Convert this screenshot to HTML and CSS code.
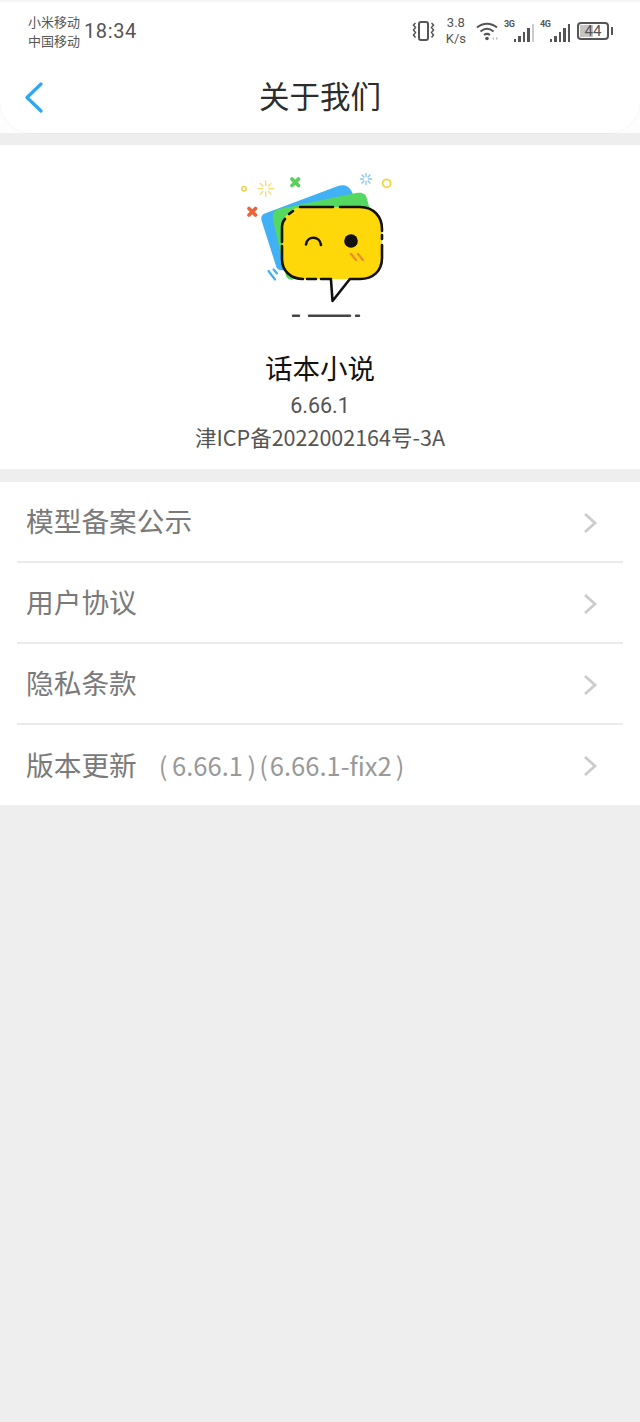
FILE: index.html
```html
<!DOCTYPE html>
<html lang="zh-CN">
<head>
    <meta charset="UTF-8">
    <meta name="viewport" content="width=device-width, initial-scale=1.0">
    <title>关于我们</title>
    <link rel="stylesheet" href="styles.css">
</head>
<body>
    <div class="top-wrap">
    <header class="top-card">
        <div class="status-bar">
            <div class="carriers"><span>小米移动</span><span>中国移动</span></div>
            <div class="clock">18:34</div>
            <div class="status-right">
                <svg class="vibrate" width="23" height="22" viewBox="0 0 23 22" fill="none" stroke="#555" stroke-width="2">
                    <rect x="7" y="2" width="9" height="18" rx="2"/>
                    <path d="M3.500 3L1.500 5l2 2.500-2 2.500 2 2.500-2 2.500 2 2.500M19.500 3l2 2-2 2.500 2 2.500-2 2.500 2 2.500-2 2.500" stroke-width="1.500"/>
                </svg>
                <div class="speed"><span>3.8</span><span>K/s</span></div>
                <svg class="wifi" width="23" height="20" viewBox="0 0 23 20" fill="none" stroke="#555" stroke-width="2">
                    <path d="M1 6.500c6-5 14-5 20 0M4.500 10.500c4-3.400 9-3.400 13 0M8 14c2-1.500 4-1.500 6 0"/>
                    <circle cx="11" cy="17.500" r="1.800" fill="#555" stroke="none"/>
                    <path d="M16 17.500l2-1.800v3.600zM22 17.500l-2-1.800v3.600z" fill="#c4c4c4" stroke="none"/>
                </svg>
                <div class="signal">
                    <span class="net">3G</span>
                    <span class="bars"><i class="b1"></i><i class="b2"></i><i class="b3"></i><i class="b4"></i><i class="b5 off"></i></span>
                </div>
                <div class="signal">
                    <span class="net">4G</span>
                    <span class="bars"><i class="b1"></i><i class="b2"></i><i class="b3"></i><i class="b4"></i><i class="b5"></i></span>
                </div>
                <div class="battery">
                    <div class="battery-body"><div class="battery-fill"></div><span>44</span></div>
                    <div class="battery-tip"></div>
                </div>
            </div>
        </div>
        <div class="nav-bar">
            <svg class="back" width="20" height="32" viewBox="0 0 20 32" fill="none" stroke="#2ea7ef" stroke-width="3.200" stroke-linecap="round" stroke-linejoin="round">
                <path d="M17 2L3 15.500 17 29"/>
            </svg>
            <h1 class="nav-title">关于我们</h1>
        </div>
    </header>
    </div>

    <section class="about">
        <svg class="logo" width="160" height="150" viewBox="240 172 160 150">
            <circle cx="244" cy="188.700" r="2.200" fill="none" stroke="#f3cf4a" stroke-width="1.500"/>
            <path d="M265.700 181v4.500M265.700 192v4.500M258 188.700h4.500M269 188.700h4.500M260.300 183.500l2.500 2.500M271 183.500l-2.500 2.500M260.300 194l2.500-2.500M271 194l-2.500-2.500" stroke="#f6dc6c" stroke-width="1.300" stroke-linecap="round"/>
            <path d="M292 179l6.500 6.500M298.500 179l-6.500 6.500" stroke="#56d25a" stroke-width="3.800" stroke-linecap="round"/>
            <path d="M366 173.500v3M366 181.500v3M360.500 179h3M368.500 179h3M362 175l2 2M370 175l-2 2M362 183l2-2M370 183l-2-2" stroke="#84c6ef" stroke-width="1.300" stroke-linecap="round"/>
            <circle cx="386.700" cy="183.300" r="4" fill="none" stroke="#f3d53a" stroke-width="1.800"/>
            <path d="M249 208.500l6.500 6.500M255.500 208.500l-6.500 6.500" stroke="#ef6235" stroke-width="3.600" stroke-linecap="round"/>
            <path d="M268.500 271l6.500 8.500M273.500 269.500l3.500 4" stroke="#3fb2ea" stroke-width="2.200" stroke-linecap="round"/>
            <path d="M266 213l72-27c7-2 11 0 14 6l10 23-77 55c-6 1-8-1-9-4l-14-44c-2-5 0-8 4-9z" fill="#41b1f6"/>
            <path d="M279 209l77-16c7-1 10 1 11 6l3 11-78 70c-4-1-5-2-6-4l-13-56c-1-6 1-10 6-11z" fill="#55d85f"/>
            <rect x="282" y="207" width="100" height="72" rx="21" fill="#ffd80a"/>
            <g fill="none" stroke="#111" stroke-width="2.600" stroke-linecap="round" stroke-linejoin="round">
                <path d="M300 207h33M340 207h20c14 0 22 10 22 22v2M382 235v4M382 245v13c0 13-9 21-22 21h-10"/>
                <path d="M289 214l4-3M282 242v-14c0-4 1-7 3-9M282 246v13c0 12 9 20 21 20M307 279h9M321 279h10"/>
                <path d="M331 280l1.500 21 17-21.500"/>
                <path d="M306 244.500c1-9 14-9 15 .5"/>
            </g>
            <circle cx="351" cy="241" r="6.800" fill="#111"/>
            <path d="M351 254l5 6M358 254l5 6" stroke="#f08a2c" stroke-width="2.300" stroke-linecap="round"/>
            <path d="M293 315.700h6M309 315.700h41M356 315.700h3" stroke="#444" stroke-width="2.500" stroke-linecap="round"/>
        </svg>
        <h2 class="app-name">话本小说</h2>
        <p class="app-version">6.66.1</p>
        <p class="app-icp">津ICP备2022002164号-3A</p>
    </section>

    <ul class="menu">
        <li class="menu-item">
            <span class="menu-label">模型备案公示</span>
            <svg class="chevron" width="16" height="24" viewBox="0 0 16 24" fill="none" stroke="#ccc" stroke-width="2.800"><path d="M3 3l10 9-10 9"/></svg>
        </li>
        <li class="menu-item">
            <span class="menu-label">用户协议</span>
            <svg class="chevron" width="16" height="24" viewBox="0 0 16 24" fill="none" stroke="#ccc" stroke-width="2.800"><path d="M3 3l10 9-10 9"/></svg>
        </li>
        <li class="menu-item">
            <span class="menu-label">隐私条款</span>
            <svg class="chevron" width="16" height="24" viewBox="0 0 16 24" fill="none" stroke="#ccc" stroke-width="2.800"><path d="M3 3l10 9-10 9"/></svg>
        </li>
        <li class="menu-item">
            <span class="menu-label">版本更新</span>
            <span class="menu-extra">( 6.66.1 )<span class="paren-open">(</span>6.66.1-fix2<span class="paren-close">)</span></span>
            <svg class="chevron" width="16" height="24" viewBox="0 0 16 24" fill="none" stroke="#ccc" stroke-width="2.800"><path d="M3 3l10 9-10 9"/></svg>
        </li>
    </ul>
</body>
</html>
```

FILE: styles.css
```css
* {
    box-sizing: border-box;
}

html, body {
    height: 100%;
}

body {
    margin: 0;
    background-color: #eeeeee;
    font-family: "Noto Sans CJK SC", Roboto, sans-serif;
    overflow: hidden;
}

.top-wrap {
    height: 133px;
    background-color: #fdfdfd;
}

.top-card {
    height: 133px;
    padding-top: 2px;
    background-color: #fff;
    border-top: 2px solid #f6f6f6;
    border-radius: 0 0 32px 32px;
    box-shadow: 0 0 2px rgba(0, 0, 0, 0.07);
}

.status-bar {
    display: flex;
    align-items: center;
    height: 54px;
    margin-bottom: 4px;
    padding: 0 28px;
    color: #555;
}

.carriers {
    display: flex;
    flex-direction: column;
    font-size: 13px;
    line-height: 19px;
}

.clock {
    margin-left: 4px;
    font-family: Roboto, sans-serif;
    font-size: 20px;
    letter-spacing: 0.6px;
}

.status-right {
    display: flex;
    align-items: center;
    margin-left: auto;
    margin-right: -1px;
}

.speed {
    display: flex;
    flex-direction: column;
    align-items: center;
    margin-left: 11px;
    font-family: Roboto, sans-serif;
    font-size: 13px;
    line-height: 16px;
}

.wifi {
    margin-left: 10px;
}

.signal {
    position: relative;
    width: 30px;
    height: 22px;
    margin-left: 5px;
}

.signal + .signal {
    margin-left: 6px;
}

.net {
    position: absolute;
    top: 0;
    left: 0;
    font-family: Roboto, sans-serif;
    font-size: 9px;
    font-weight: 700;
    letter-spacing: -0.5px;
    line-height: 9px;
}

.bars {
    position: absolute;
    right: 0;
    bottom: 0;
    display: flex;
    align-items: flex-end;
    gap: 2px;
}

.bars i {
    display: block;
    width: 2.500px;
    background-color: #555;
}

.bars .b1 { height: 3px; }
.bars .b2 { height: 6px; }
.bars .b3 { height: 10px; }
.bars .b4 { height: 14px; }
.bars .b5 { height: 18px; }
.bars .off { background-color: #ccc; }

.battery {
    display: flex;
    align-items: center;
    margin-left: 7px;
}

.battery-body {
    position: relative;
    width: 32px;
    height: 18px;
    border: 2px solid #555;
    border-radius: 4px;
    font-family: Roboto, sans-serif;
    font-size: 15px;
    line-height: 14px;
    text-align: center;
}

.battery-body span {
    position: relative;
}

.battery-fill {
    position: absolute;
    top: 1px;
    bottom: 1px;
    left: 1px;
    width: 48%;
    background-color: #c4c4c4;
}

.battery-tip {
    width: 2px;
    height: 8px;
    margin-left: 2px;
    background-color: #555;
}

.nav-bar {
    position: relative;
    display: flex;
    align-items: center;
    justify-content: center;
    height: 71px;
}

.back {
    position: absolute;
    left: 24px;
    top: 20px;
}

.nav-title {
    margin: -4px 0 0;
    color: #2c2c2c;
    font-size: 30.500px;
    font-weight: 400;
    line-height: 71px;
}

.about {
    display: flex;
    flex-direction: column;
    align-items: center;
    height: 324px;
    margin-top: 12px;
    background-color: #fff;
}

.logo {
    display: block;
    margin-top: 27px;
}

.app-name {
    margin: 26px 0 0;
    color: #111;
    font-size: 27.500px;
    font-weight: 400;
    line-height: 38px;
}

.app-version {
    margin: 5px 0 0;
    color: #555;
    font-family: Roboto, sans-serif;
    font-size: 21.500px;
    line-height: 30px;
}

.app-icp {
    margin: 1px 0 0;
    color: #555;
    font-size: 21.500px;
    line-height: 30px;
}

.menu {
    margin: 13px 0 0;
    padding: 0;
    list-style: none;
    background-color: #fff;
}

.menu-item {
    display: flex;
    align-items: center;
    height: 81px;
    margin: 0 17px;
    padding: 0 9px;
    border-bottom: 2px solid #ebebeb;
}

.menu-item:last-child {
    height: 80px;
    border-bottom: none;
}

.menu-label {
    margin-top: -3px;
    color: #7a7a7a;
    font-size: 27.700px;
}

.menu-extra {
    margin-top: -1px;
    margin-left: 22px;
    color: #999;
    font-size: 25.500px;
    word-spacing: -1px;
}

.paren-open {
    margin: 0 2px 0 3px;
}

.paren-close {
    margin-left: 4px;
}

.chevron {
    margin-top: 2px;
    margin-left: auto;
    margin-right: 16px;
}
```
